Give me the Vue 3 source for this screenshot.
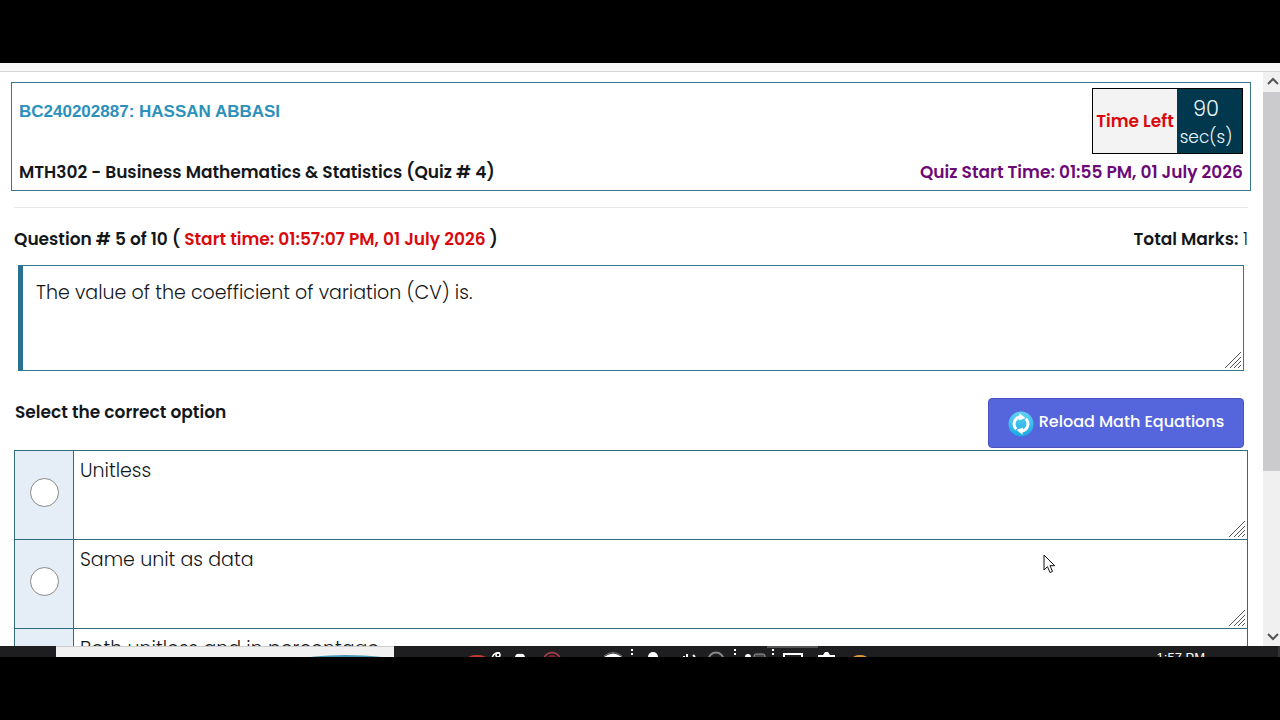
<script setup>
import { ref } from 'vue'

const options = ['Unitless', 'Same unit as data', 'Both unitless and in percentage']
const selected = ref(null)
</script>

<template>
  <div class="screen">
    <div class="band"></div>
    <div class="window">
      <div class="strip"></div>
      <div class="body">
        <main class="page">
          <header class="info">
            <div class="line top">
              <span class="student">BC240202887: HASSAN ABBASI</span>
              <div class="timer">
                <span class="timer-label">Time Left</span>
                <span class="timer-value"><span class="count">90</span><span>sec(s)</span></span>
              </div>
            </div>
            <div class="line">
              <h1>MTH302 - Business Mathematics &amp; Statistics (Quiz # 4)</h1>
              <span class="start">Quiz Start Time: 01:55 PM, 01 July 2026</span>
            </div>
          </header>
          <hr />
          <div class="line meta">
            <h2>Question # 5 of 10 ( <span class="red">Start time: 01:57:07 PM, 01 July 2026</span> )</h2>
            <span class="marks"><b>Total Marks:</b> 1</span>
          </div>
          <section class="question">
            The value of the coefficient of variation (CV) is.
            <svg class="grip" viewBox="0 0 18 18"><path d="M1 17L17 1M6 17L17 6M10 17L17 10M14 17L17 14" /></svg>
          </section>
          <div class="line choose">
            <h2>Select the correct option</h2>
            <button type="button" class="reload">
              <svg viewBox="0 0 26 26" class="reload-icon">
                <defs>
                  <linearGradient id="disc" x1="0" y1="0" x2="0" y2="1">
                    <stop offset="0" stop-color="#62d3f5" />
                    <stop offset="1" stop-color="#16a9e2" />
                  </linearGradient>
                </defs>
                <circle cx="13" cy="13" r="12.5" fill="url(#disc)" />
                <path d="M8.200 18.200A7.200 7.200 0 0 1 12 6" class="arc" />
                <path d="M17.800 7.800A7.200 7.200 0 0 1 14 20" class="arc" />
                <path d="M11.500 2.200L17.500 7L11 9.500Z" fill="#fff" />
                <path d="M14.500 23.800L8.500 19L15 16.500Z" fill="#fff" />
              </svg>
              <span>Reload Math Equations</span>
            </button>
          </div>
          <table class="options">
            <tbody>
              <tr v-for="(text, i) in options" :key="text">
                <td class="pick"><input :id="'opt' + i" v-model="selected" type="radio" name="answer" :value="i" /></td>
                <td class="answer">
                  <label :for="'opt' + i">{{ text }}</label>
                  <svg class="grip" viewBox="0 0 18 18"><path d="M1 17L17 1M6 17L17 6M10 17L17 10M14 17L17 14" /></svg>
                </td>
              </tr>
            </tbody>
          </table>
        </main>
        <div class="scrollbar">
          <svg viewBox="0 0 17 20" class="arrow"><path d="M5 12L10 7L15 12" /></svg>
          <div class="thumb"></div>
          <svg viewBox="0 0 17 20" class="arrow end"><path d="M5 8L10 13L15 8" /></svg>
        </div>
        <svg class="cursor" viewBox="0 0 13 20"><path d="M1 1V16L4.500 12.700L7 18.500L9.500 17.400L7 11.700H11.700Z" /></svg>
      </div>
    </div>
    <footer class="taskbar">
      <div class="preview">
        <svg viewBox="0 0 338 11"><ellipse cx="290" cy="13" rx="44" ry="5" fill="#4697b6" /></svg>
      </div>
      <svg class="tray" viewBox="394 0 500 11">
        <ellipse cx="477" cy="14" rx="11" ry="5" fill="#c8392f" />
        <g fill="none" stroke="#fff" stroke-width="1.500">
          <circle cx="498" cy="9" r="2" /><path d="M492 12Q494 6 500 7" />
        </g>
        <path d="M515 11Q516 7 520 8Q524 7 525 11Z" fill="#fff" />
        <circle cx="552" cy="15" r="8.500" fill="none" stroke="#b9434f" stroke-width="1.500" />
        <circle cx="552" cy="14" r="5" fill="#8b1f2c" />
        <path d="M604 11Q613 4 622 11Z" fill="#fff" />
        <path d="M604 10Q613 3 622 10" fill="none" stroke="#777" />
        <g stroke="#fff" stroke-width="2" stroke-dasharray="2 2">
          <path d="M632 3V11M735 3V11M773 3V11" />
        </g>
        <circle cx="653" cy="11" r="5" fill="#fff" />
        <path d="M683 11H685M687 8V11M693 9L695 11" stroke="#fff" stroke-width="2" fill="none" />
        <circle cx="716" cy="14" r="7.500" fill="none" stroke="#888" stroke-width="2" />
        <circle cx="748" cy="11" r="3" fill="#fff" />
        <rect x="754" y="8" width="11" height="6" rx="2" fill="#444" stroke="#999" />
        <path d="M767 1H818" stroke="#555" stroke-width="2" />
        <path d="M784 11V8H802V11" fill="none" stroke="#fff" stroke-width="2" />
        <path d="M818 11V9H823L825 6H828L830 9H835V11Z" fill="#fff" />
        <ellipse cx="860" cy="13" rx="8" ry="4" fill="#e39a36" />
      </svg>
      <time class="clock">1:57 PM</time>
    </footer>
    <div class="band"></div>
  </div>
</template>

<style>
html, body { margin: 0; background: #000; }
</style>

<style scoped>
* { box-sizing: border-box; }
.screen {
  display: grid;
  grid-template-rows: 63px 1fr 11px 63px;
  height: 100vh;
  overflow: hidden;
  background: #000;
  color: #14171a;
  font: 300 19px/28px Poppins, Inter, "Open Sans", sans-serif;
}
.window { display: flex; flex-direction: column; min-height: 0; background: #fff; overflow: hidden; }
.strip { flex: none; height: 9px; background: #f7f7f7; border-bottom: 1px solid #d5d5d5; }
.body { position: relative; display: flex; flex: 1; min-height: 0; }
.page { flex: 1; min-width: 0; padding: 10px 15px 0 14px; overflow: hidden; }
.info { margin: 0 -3px; height: 109px; padding: 5px 7px 0; border: 1px solid #38768c; }
.line { display: flex; justify-content: space-between; }
.top { height: 66px; margin-bottom: 4px; }
.student { padding-top: 10px; font: bold 17px/28px "Liberation Sans", Arial, sans-serif; color: #2b91bb; }
.timer { display: flex; border: 1px solid #000; background: #f4f3f3; }
.timer-label { display: flex; align-items: center; justify-content: center; width: 84px; font-weight: 600; font-size: 17px; color: #d80a0d; }
.timer-value { display: flex; flex-direction: column; align-items: center; width: 65px; padding: 6px 7px 0 0; background: #02384e; color: #e8f6fa; font-size: 17px; white-space: nowrap; }
.count { font-size: 21px; }
h1, h2, .start, .marks { margin: 0; font-size: 17px; font-weight: 600; line-height: 28px; white-space: nowrap; }
.start { color: #6c0a78; }
.marks { font-weight: 300; }
.marks b { font-weight: 600; }
.red { color: #d80a0d; }
hr { margin: 16px 0 0; border: 0; border-top: 1px solid #e6e6e6; }
.meta { margin-top: 17px; }
.question { position: relative; height: 106px; margin: 12px 4px 0; padding: 13px; border: 1px solid #2d7791; border-left: 5px solid #28718f; }
.grip { position: absolute; right: 1px; bottom: 1px; width: 18px; height: 18px; fill: none; stroke: #555; stroke-width: 1; }
.choose { margin: 27px 4px 2px 1px; }
.reload { display: flex; align-items: center; justify-content: center; gap: 5px; width: 256px; height: 50px; padding: 0 0 2px; border: 1px solid #4a52bd; border-radius: 4px; background: #5566dc; color: #fff; font: 500 16px/28px Poppins, Inter, "Open Sans", sans-serif; white-space: nowrap; }
.reload-icon { flex: none; width: 26px; height: 26px; margin-top: 4px; }
.arc { fill: none; stroke: #fff; stroke-width: 3; }
.options { width: 100%; border-collapse: collapse; table-layout: fixed; }
.options tr { height: 89px; }
.options td { padding: 0; border: 1px solid #2f6c80; }
.options .pick { width: 59px; background: #e5edf6; text-align: center; vertical-align: middle; }
.pick input { appearance: none; display: block; width: 29px; height: 29px; margin: 0 auto 6px; border: 1px solid #888; border-radius: 50%; background: #fff; }
.pick input:checked { border: 8px solid #1a73e8; }
.options .answer { position: relative; padding: 6px 6px 0; vertical-align: top; }
.answer label { display: block; }
.scrollbar { display: flex; flex-direction: column; width: 17px; background: #f0f0f1; }
.arrow { flex: none; width: 17px; height: 20px; fill: none; stroke: #555; stroke-width: 2; }
.thumb { height: 66%; background: #cbcacc; }
.end { margin-top: auto; }
.cursor { position: absolute; left: 1043px; top: 482px; width: 13px; height: 20px; fill: #fff; stroke: #111; stroke-width: 1; }
.taskbar { display: flex; background: #1e1e20; overflow: hidden; border-right: 2px solid #333; }
.preview { flex: none; width: 338px; margin-left: 56px; background: #f1f1f1; border-top: 1px solid #ccc; }
.preview svg { display: block; width: 338px; height: 11px; }
.tray { flex: none; width: 500px; height: 11px; }
.clock { margin: 6px 73px 0 auto; color: #fff; font: 13px/12px "Liberation Sans", Arial, sans-serif; white-space: nowrap; }
</style>
